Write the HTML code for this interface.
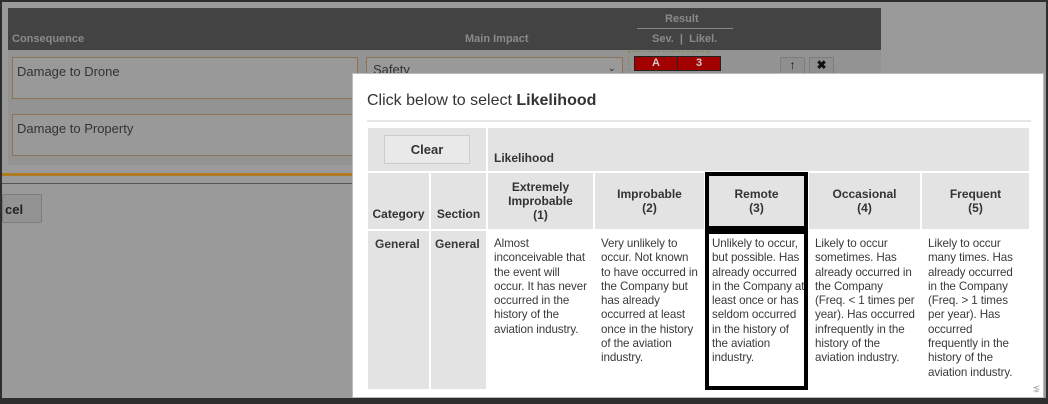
<!DOCTYPE html>
<html><head><style>
*{box-sizing:border-box;margin:0;padding:0}
body{width:1048px;height:404px;overflow:hidden;background:#9a9a9a;font-family:"Liberation Sans",Arial,sans-serif;position:relative}
.abs{position:absolute}
.frame{left:0;top:0;width:1048px;height:404px;border:2px solid #2e2e2e;border-bottom:6px solid #2e2e2e}
.hdr{left:8px;top:8px;width:873px;height:42px;background:#434343;color:#8a8a8a;font-weight:bold;font-size:11px}
.panel{left:8px;top:50px;width:873px;height:115px;background:#939393}
.box{border:1px solid #8d7358;background:#999;font-size:13px;color:#333;padding:6px 4px}
.redc{background:#a30000;color:#ccc;font-weight:bold;font-size:11px;text-align:center;border:1px solid #222;height:15px;line-height:13px}
.btn{background:#8f8f8f;border:1px solid #7d7d7d;border-radius:2px}
.modal{left:352px;top:73px;width:692px;height:325px;background:#fff;border:1px solid #bbb}
table{border-collapse:separate;border-spacing:2px;position:absolute;left:13px;top:52px;width:665px;background:#fff;table-layout:fixed}
td{background:#e3e3e3;font-size:12px;color:#333;vertical-align:middle}
.h td{font-weight:bold;text-align:center}
.body td{background:#fff;vertical-align:top;padding:6px 2px 6px 6px;line-height:14.3px;font-size:11.6px;letter-spacing:-0.1px;color:#3a3a3a;white-space:nowrap;overflow:hidden}
.body td.g{background:#e3e3e3;font-weight:bold;padding:6px 7px;font-size:12px;letter-spacing:0}
.sel{outline:4px solid #000;outline-offset:-3px}
</style></head><body>
<div class="abs frame"></div>
<div class="abs hdr">
 <span class="abs" style="left:4px;top:25px">Consequence</span>
 <span class="abs" style="left:457px;top:25px">Main Impact</span>
 <span class="abs" style="left:657px;top:5px">Result</span>
 <div class="abs" style="left:629px;top:20px;width:96px;height:1px;background:#888"></div>
 <span class="abs" style="left:644px;top:25px">Sev. &nbsp;| &nbsp;Likel.</span>
</div>
<div class="abs panel"></div>
<div class="abs box" style="left:12px;top:57px;width:346px;height:42px">Damage to Drone</div>
<div class="abs box" style="left:12px;top:114px;width:346px;height:42px">Damage to Property</div>
<div class="abs box" style="left:366px;top:57px;width:257px;height:30px;padding:4px 6px">Safety<span style="position:absolute;right:6px;top:5px;font-size:10px">&#8964;</span></div>
<div class="abs" style="left:628px;top:51px;width:81px;height:30px;border:1px dashed #8a8a50"></div>
<div class="abs redc" style="left:634px;top:56px;width:44px">A</div>
<div class="abs redc" style="left:677px;top:56px;width:44px">3</div>
<div class="abs btn" style="left:780px;top:57px;width:25px;height:20px;text-align:center;font-size:12px;font-weight:bold;color:#111">&#8593;</div>
<div class="abs btn" style="left:809px;top:57px;width:25px;height:20px;text-align:center;font-size:12px;font-weight:bold;color:#111">&#10006;</div>
<div class="abs" style="left:2px;top:173px;width:352px;height:3px;background:#b07a20"></div>
<div class="abs" style="left:2px;top:183px;width:352px;height:1px;background:#555"></div>
<div class="abs btn" style="left:2px;top:194px;width:40px;height:29px;font-size:13px;font-weight:bold;color:#222;padding:7px 0 0 2px;background:#939393">cel</div>
<div class="abs modal">
 <div class="abs" style="left:14px;top:18px;font-size:16px;color:#333">Click below to select <b>Likelihood</b></div>
 <div class="abs" style="left:14px;top:46px;width:664px;height:2px;background:#e6e6e6"></div>
 <table>
  <colgroup><col style="width:61px"><col style="width:55px"><col style="width:105px"><col style="width:109px"><col style="width:101px"><col style="width:111px"><col style="width:107px"></colgroup>
  <tr class="h" style="height:43px"><td colspan="2" style="padding:0"><div style="margin:0 auto;width:86px;height:29px;border:1px solid #ccc;background:#e9e9e9;line-height:27px;font-size:13px">Clear</div></td><td colspan="5" style="text-align:left;padding:16px 6px 0">Likelihood</td></tr>
  <tr class="h" style="height:56px"><td style="vertical-align:bottom;padding-bottom:8px">Category</td><td style="vertical-align:bottom;padding-bottom:8px">Section</td><td>Extremely<br>Improbable<br>(1)</td><td>Improbable<br>(2)</td><td class="sel">Remote<br>(3)</td><td>Occasional<br>(4)</td><td>Frequent<br>(5)</td></tr>
  <tr class="body" style="height:158px"><td class="g">General</td><td class="g" style="padding:6px 4px">General</td><td>Almost<br>inconceivable that<br>the event will<br>occur. It has never<br>occurred in the<br>history of the<br>aviation industry.</td><td>Very unlikely to<br>occur. Not known<br>to have occurred in<br>the Company but<br>has already<br>occurred at least<br>once in the history<br>of the aviation<br>industry.</td><td class="sel">Unlikely to occur,<br>but possible. Has<br>already occurred<br>in the Company at<br>least once or has<br>seldom occurred<br>in the history of<br>the aviation<br>industry.</td><td>Likely to occur<br>sometimes. Has<br>already occurred in<br>the Company<br>(Freq. &lt; 1 times per<br>year). Has occurred<br>infrequently in the<br>history of the<br>aviation industry.</td><td>Likely to occur<br>many times. Has<br>already occurred<br>in the Company<br>(Freq. &gt; 1 times<br>per year). Has<br>occurred<br>frequently in the<br>history of the<br>aviation industry.</td></tr>
 </table>
 <div class="abs" style="right:3px;bottom:3px;font-size:9px;color:#999">&#8936;</div>
</div>
</body></html>
